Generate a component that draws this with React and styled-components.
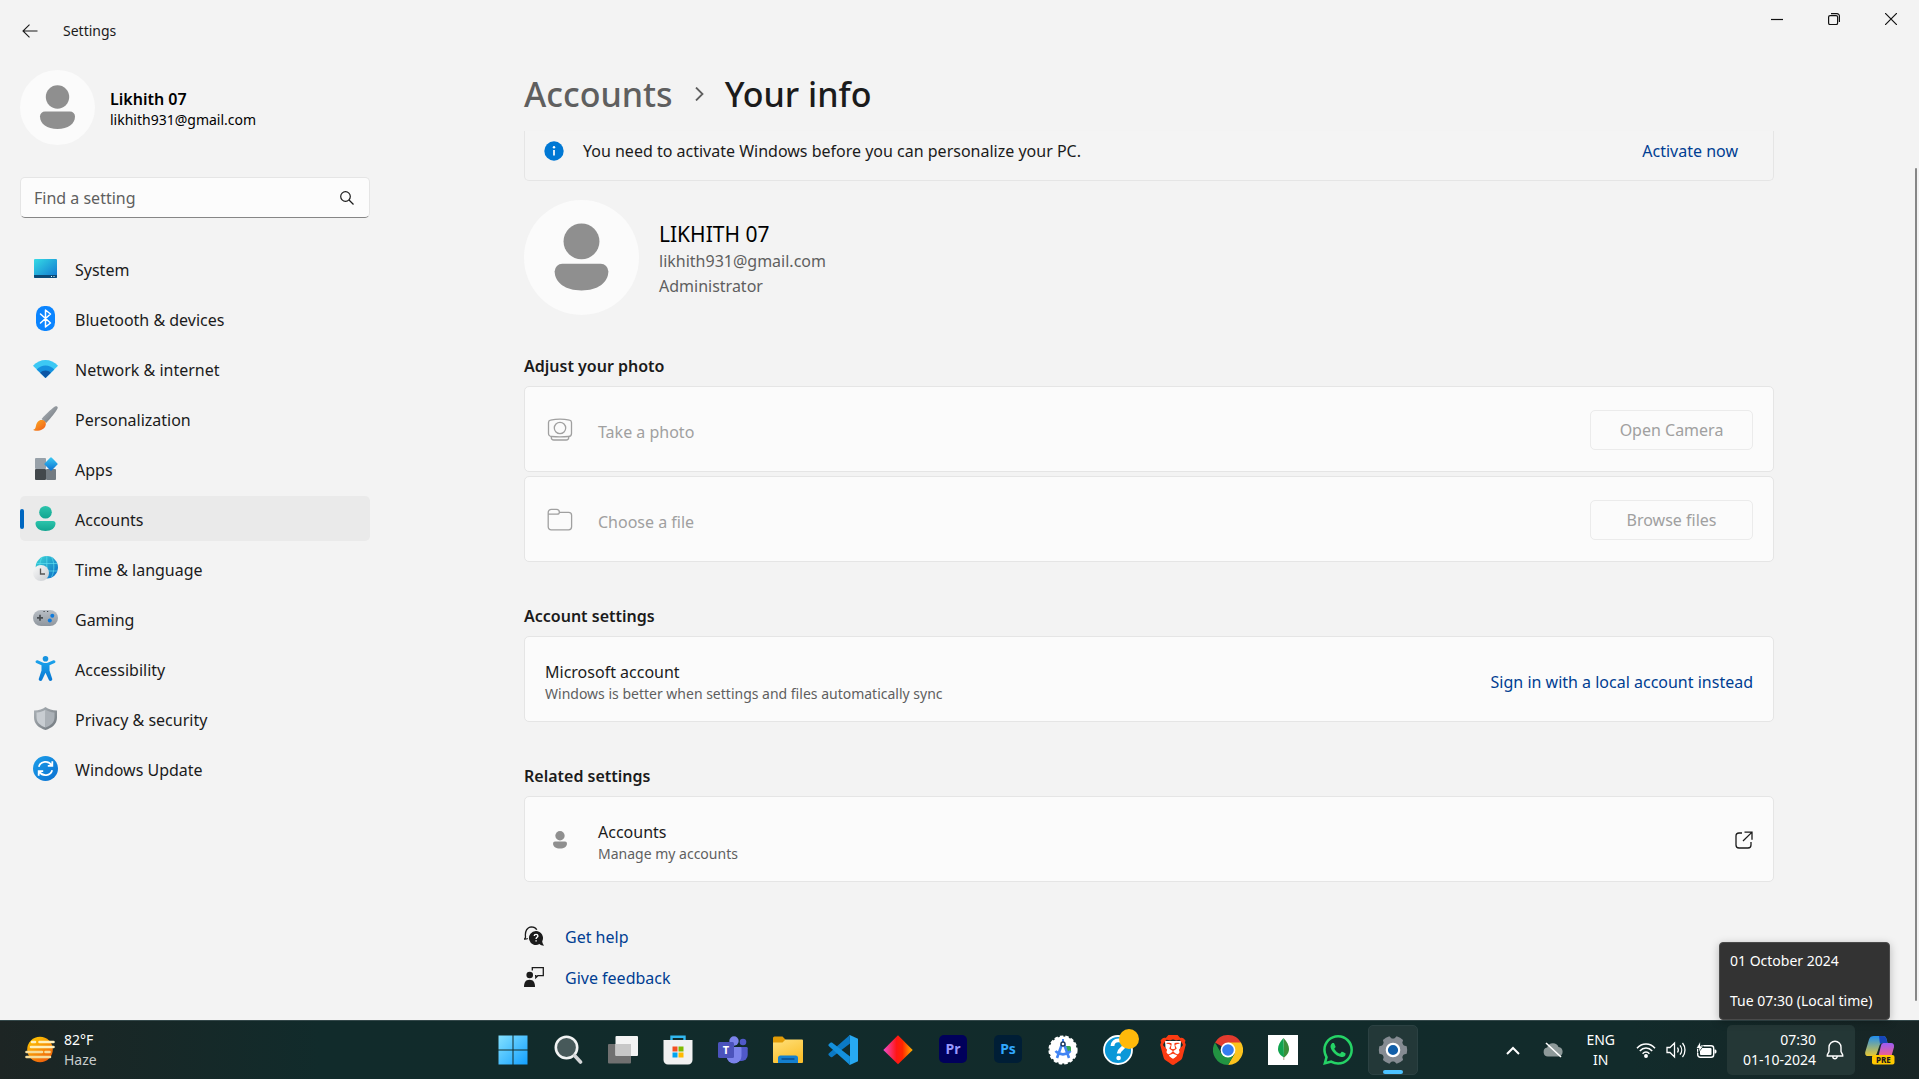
import React from 'react';
import styled, { createGlobalStyle } from 'styled-components';
import { SiBrave, SiWhatsapp } from 'react-icons/si';

const GlobalStyle = createGlobalStyle`
  *, *::before, *::after { box-sizing: border-box; }
  body {
    margin: 0;
    background: #f3f3f3;
    color: #1b1b1b;
    font-family: 'Noto Sans', 'Open Sans', sans-serif;
    font-size: 16px;
    line-height: 24px;
  }
  button, input { font: inherit; color: inherit; }
  a { text-decoration: none; color: inherit; }
  h1, h2, p, ul { margin: 0; padding: 0; font: inherit; }
  ul { list-style: none; }
  svg { display: block; flex: none; }
`;

const Desktop = styled.div`
  display: flex;
  flex-direction: column;
  min-height: 100vh;
`;

const SettingsWindow = styled.div`
  flex: 1;
  display: flex;
  flex-direction: column;
`;

const TitleBar = styled.header`
  display: flex;
  justify-content: space-between;
  height: 62px;
`;

const TitleLeft = styled.div`
  display: flex;
  align-items: center;
  gap: 16px;
  padding-left: 12px;
  font-size: 14px;
`;

const PlainButton = styled.button`
  display: grid;
  place-items: center;
  width: ${(p) => p.$w}px;
  height: ${(p) => p.$h}px;
  padding: 0;
  border: 0;
  background: none;
`;

const WindowControls = styled.div`
  display: flex;
`;

const Columns = styled.div`
  flex: 1;
  display: flex;
`;

const Sidebar = styled.aside`
  flex: none;
  width: 379px;
  padding: 8px 9px 0 20px;
`;

const Profile = styled.div`
  display: flex;
  align-items: center;
  gap: 15px;
  color: #000;
`;

const ProfileText = styled.div`
  padding-top: 4px;
  line-height: 21px;
`;

const ProfileName = styled.p`
  font-weight: 600;
`;

const SmallText = styled.p`
  font-size: 14px;
  line-height: 20px;
  color: ${(p) => p.$color || 'inherit'};
`;

const SearchBox = styled.form`
  display: flex;
  align-items: center;
  height: 41px;
  margin: 32px 0 28px;
  padding: 0 15px 0 13px;
  border: 1px solid #e5e5e5;
  border-bottom-color: #868686;
  border-radius: 5px;
  background: #fcfcfc;
`;

const SearchInput = styled.input`
  flex: 1;
  min-width: 0;
  padding: 0;
  border: 0;
  outline: 0;
  background: none;
  &::placeholder { color: #5f5f5f; opacity: 1; }
`;

const NavList = styled.ul`
  display: flex;
  flex-direction: column;
  gap: 5px;
`;

const NavLink = styled.a`
  position: relative;
  display: flex;
  align-items: center;
  gap: 17px;
  height: 45px;
  padding-left: 13px;
  border-radius: 5px;
  background: ${(p) => (p.$active ? '#eaeaea' : 'transparent')};
  &::before {
    content: '';
    display: ${(p) => (p.$active ? 'block' : 'none')};
    position: absolute;
    left: 0;
    top: 13px;
    width: 4px;
    height: 20px;
    border-radius: 2px;
    background: #0067c0;
  }
`;

const NavLabel = styled.span`
  padding-top: 2px;
`;

const Main = styled.main`
  position: relative;
  flex: 1;
  min-width: 0;
  padding: 8px 20px 0;
`;

const ScrollThumb = styled.div`
  position: absolute;
  top: 106px;
  bottom: 19px;
  right: 2px;
  width: 2px;
  border-radius: 1px;
  background: #868686;
`;

const Content = styled.div`
  max-width: 1250px;
  margin: 0 auto;
`;

const Breadcrumb = styled.nav`
  display: flex;
  align-items: center;
  gap: 19px;
  padding-bottom: 13px;
  font-size: 34px;
  line-height: 48px;
  font-weight: 500;
`;

const CrumbLink = styled.a`
  color: #5f5f5f;
`;

const Banner = styled.div`
  display: flex;
  align-items: center;
  gap: 19px;
  height: 50px;
  padding: 0 35px 9px 19px;
  border: 1px solid #e5e5e5;
  border-top: 0;
  border-radius: 0 0 5px 5px;
  background: #f4f4f4;
`;

const Grow = styled.div`
  flex: 1;
  min-width: 0;
`;

const BlueLink = styled.a`
  color: #003e92;
`;

const Hero = styled.div`
  display: flex;
  align-items: center;
  gap: 20px;
  margin: 19px 0 -3px;
`;

const HeroText = styled.div`
  padding-top: 2px;
`;

const HeroName = styled.p`
  color: #000;
  font-size: 21px;
  line-height: 30px;
`;

const HeroLine = styled.p`
  color: #5f5f5f;
  line-height: 25px;
`;

const SectionTitle = styled.h2`
  margin: 42px 0 8px;
  font-weight: 600;
`;

const CardStack = styled.div`
  display: flex;
  flex-direction: column;
  gap: 4px;
`;

const Card = styled.div`
  display: flex;
  align-items: center;
  height: 86px;
  padding: 2px 20px 0;
  border: 1px solid #e5e5e5;
  border-radius: 5px;
  background: #fbfbfb;
`;

const CardText = styled(Grow)`
  padding-top: 3px;
`;

const CardLink = styled(BlueLink)`
  padding-top: 3px;
`;

const CardIcon = styled.div`
  display: grid;
  place-items: center;
  width: 30px;
  margin-right: 23px;
`;

const Muted = styled.span`
  color: #a0a0a0;
`;

const CardButton = styled.button`
  width: 163px;
  height: 40px;
  padding: 0;
  border: 1px solid #ebebeb;
  border-radius: 5px;
  background: #fbfbfb;
  &:disabled { color: #a0a0a0; }
`;

const HelpLinks = styled.ul`
  display: flex;
  flex-direction: column;
  gap: 17px;
  padding: 43px 0 20px;
`;

const HelpItem = styled.li`
  display: flex;
  align-items: center;
  gap: 21px;
  svg { margin-bottom: 3px; }
`;

const Taskbar = styled.footer`
  display: grid;
  grid-template-columns: 1fr auto 1fr;
  align-items: center;
  height: 59px;
  padding-right: 13px;
  border-top: 1px solid #34484a;
  background: linear-gradient(90deg, #1d2524 0, #192726 100px, #112b2b 320px, #122b2b 85%, #182525 100%);
  color: #fff;
  font-size: 14px;
  line-height: 20px;
`;

const Weather = styled.button`
  display: flex;
  align-items: center;
  gap: 9px;
  justify-self: start;
  padding: 0 0 0 25px;
  border: 0;
  background: none;
  text-align: left;
`;

const WeatherNote = styled.span`
  display: block;
  color: #c8cccc;
`;

const AppStrip = styled.div`
  display: flex;
  gap: 5px;
`;

const AppButton = styled.button`
  position: relative;
  display: grid;
  place-items: center;
  width: 50px;
  height: 50px;
  padding: 0;
  border: 1px solid ${(p) => (p.$active ? '#2b4142' : 'transparent')};
  border-radius: 5px;
  background: ${(p) => (p.$active ? '#233838' : 'none')};
  &::after {
    content: '';
    display: ${(p) => (p.$active ? 'block' : 'none')};
    position: absolute;
    bottom: 0;
    left: 14px;
    width: 20px;
    height: 4px;
    border-radius: 2px;
    background: #4cc2ff;
  }
`;

const AdobeTile = styled.span`
  display: grid;
  place-items: center;
  width: 28px;
  height: 28px;
  margin-bottom: 2px;
  border-radius: 5px;
  background: ${(p) => p.$bg};
  color: ${(p) => p.$fg};
  font-size: 14px;
  font-weight: 700;
`;

const IconStack = styled.span`
  display: grid;
  place-items: center;
  > * { grid-area: 1 / 1; }
`;

const Tray = styled.div`
  display: flex;
  align-items: center;
  justify-self: end;
  padding-right: 11px;
`;

const TrayButton = styled.button`
  display: flex;
  align-items: center;
  justify-content: center;
  gap: 10px;
  height: 50px;
  padding: 0 ${(p) => p.$pad}px;
  border: 0;
  border-radius: 5px;
  background: ${(p) => (p.$lit ? '#243736' : 'none')};
  text-align: ${(p) => p.$align || 'center'};
`;

const ClockText = styled.span`
  min-width: 78px;
`;

const ClockWrap = styled.div`
  position: relative;
  margin-right: 10px;
`;

const Tooltip = styled.div`
  position: absolute;
  left: -8px;
  bottom: calc(100% + 5px);
  width: max-content;
  min-width: 171px;
  padding: 8px 12px 8px 10px;
  border: 1px solid #4a4a4a;
  border-radius: 4px;
  background: #333;
  box-shadow: 0 2px 8px rgba(0, 0, 0, 0.25);
`;

const TooltipTime = styled.p`
  margin-top: 20px;
`;

/* ---------- shared drawings ---------- */

const Person = ({ size, disc }) => (
  <svg width={size} height={size} viewBox="0 0 75 75">
    {disc && <circle cx="37.5" cy="37.5" r="37.5" fill="#fbfbfb" />}
    <circle cx="37.5" cy="27" r="11.7" fill="#8f8f8f" />
    <path d="M25 41.5h25a5 5 0 0 1 5 5C55 54 48 59 37.5 59S20 54 20 46.500a5 5 0 0 1 5-5z" fill="#8f8f8f" />
  </svg>
);

const Grad = ({ id, from, to, x2 = 1, y2 = 1 }) => (
  <linearGradient id={id} x1="0" y1="0" x2={x2} y2={y2}>
    <stop offset="0" stopColor={from} />
    <stop offset="1" stopColor={to} />
  </linearGradient>
);

/* ---------- sidebar icons ---------- */

const NavSvg = ({ children }) => (
  <svg width="25" height="25" viewBox="0 0 25 25">{children}</svg>
);

const SystemIcon = () => (
  <NavSvg>
    <defs><Grad id="sys" from="#35dbe6" to="#0f74cf" /></defs>
    <rect x="1" y="3" width="23" height="19" rx="1" fill="url(#sys)" />
    <path d="M1 19h23v2a1 1 0 0 1-1 1H2a1 1 0 0 1-1-1z" fill="#0a4a78" />
    <path d="M18 20.500h1M20.500 20.500h1" stroke="#dff" strokeWidth="1" />
  </NavSvg>
);

const BluetoothIcon = () => (
  <NavSvg>
    <rect x="3" width="19" height="25" rx="8.5" fill="#0a84ff" />
    <path d="M7.500 8l10 9-5 4V4l5 4-10 9" fill="none" stroke="#fff" strokeWidth="1.500" strokeLinejoin="round" strokeLinecap="round" />
  </NavSvg>
);

const NetworkIcon = () => (
  <NavSvg>
    <path d="M0 9.800C7 2.200 18 2.200 25 9.800L12.500 22z" fill="#3cc8f4" />
    <path d="M3.700 13.400c5-5.300 12.600-5.300 17.600 0L12.500 22z" fill="#1590df" />
    <path d="M7.200 16.800c3-3 7.600-3 10.600 0L12.500 22z" fill="#0c56a5" />
  </NavSvg>
);

const BrushIcon = () => (
  <NavSvg>
    <defs>
      <Grad id="handle" from="#b4bac0" to="#6b7177" />
      <Grad id="bristle" from="#fdb022" to="#ef5a1a" />
    </defs>
    <path d="M22.500.3c1.500-.6 2.700.6 2 2.200-.8 2-6.500 9.500-11.300 14.500l-4.600-4C13.500 7.500 20.500 1.100 22.500.3z" fill="url(#handle)" />
    <path d="M8.500 14c2.800 0 4.800 2 4.300 4.800-.7 4-5 6-9.300 6-1.500 0-2.700-.3-3.300-1 2-.4 2.300-1.800 2.800-4C3.700 16.500 5.500 14 8.500 14z" fill="url(#bristle)" />
  </NavSvg>
);

const AppsIcon = () => (
  <NavSvg>
    <defs><Grad id="dia" from="#3ccbf4" to="#0b6fd0" /></defs>
    <rect x="2" y="2" width="11" height="11" rx="1" fill="#98a1a9" />
    <rect x="2" y="13" width="11" height="11" rx="1" fill="#43484c" />
    <rect x="13" y="13" width="10" height="11" rx="1" fill="#737b82" />
    <rect x="13" y="3" width="10" height="10" rx="1.200" transform="rotate(45 18 8)" fill="url(#dia)" />
  </NavSvg>
);

const AccountsIcon = () => (
  <NavSvg>
    <defs><Grad id="acc" from="#2cc4ac" to="#12a590" x2={0} /></defs>
    <circle cx="12.500" cy="6.300" r="6.300" fill="url(#acc)" />
    <path d="M5 15h15a2.500 2.500 0 0 1 2.500 2.500c0 4.500-4.200 7.500-10 7.500s-10-3-10-7.500A2.500 2.500 0 0 1 5 15z" fill="url(#acc)" />
  </NavSvg>
);

const TimeIcon = () => (
  <NavSvg>
    <defs><Grad id="globe" from="#3cdad6" to="#0a68c6" /><Grad id="dial" from="#fafafa" to="#c9ccd0" /></defs>
    <circle cx="13.800" cy="11.300" r="11.200" fill="url(#globe)" />
    <path d="M3.500 7.500h20.500M3.500 15h20.500M13.800 0v22M9 1c-3 6-3 14 0 20M18.600 1c3 6 3 14 0 20" fill="none" stroke="#5fe0f0" strokeWidth=".9" opacity=".75" />
    <circle cx="8" cy="17" r="8" fill="url(#dial)" />
    <path d="M7.500 12.500v5.500h4.500" fill="none" stroke="#555" strokeWidth="1.300" />
  </NavSvg>
);

const GamingIcon = () => (
  <NavSvg>
    <defs><Grad id="pad" from="#b9bfc6" to="#8f969e" x2={0} /></defs>
    <rect y="4" width="25" height="16" rx="8" fill="url(#pad)" />
    <path d="M7 8.800v6M4 11.800h6" stroke="#484d52" strokeWidth="1.700" />
    <circle cx="19.300" cy="9.700" r="2" fill="#0f7bdc" />
    <circle cx="16.800" cy="14.500" r="2" fill="#0f7bdc" />
    <path d="M10.500 5.500h1.200M14 5.500h1.200" stroke="#3d4246" strokeWidth="1.200" />
  </NavSvg>
);

const AccessIcon = () => (
  <NavSvg>
    <defs><Grad id="body" from="#1ba3ec" to="#0877d2" x2={0} /></defs>
    <circle cx="12.500" cy="2.800" r="2.800" fill="#1693e0" />
    <path d="M4.600 4.300l5.200 2.100a7 7 0 0 0 5.400 0l5.200-2.100c1.800-.6 2.900 1.900 1.200 2.800L16.500 9.200v5.300l2.700 8.300c.6 2-2.500 3-3.300 1.200L12.500 16.700 9.100 24c-.8 1.800-3.900.8-3.300-1.200l2.700-8.300V9.200L3.400 7.100C1.700 6.200 2.800 3.700 4.600 4.300z" fill="url(#body)" />
  </NavSvg>
);

const PrivacyIcon = () => (
  <NavSvg>
    <defs><Grad id="sh" from="#aeb4b9" to="#6e757b" /></defs>
    <path d="M12.500 1c3 2.200 6.500 3.300 11.500 3.500v7C24 18 19 22 12.500 24 6 22 1 18 1 11.500v-7C6 4.300 9.500 3.200 12.500 1z" fill="url(#sh)" />
    <path d="M12.500 3.800v17.700C7.500 19.700 3.500 16.500 3.500 11.500v-5c4-.3 6.500-1.100 9-2.700z" fill="#c8cdd2" />
    <path d="M12.500 3.800c2.500 1.600 5 2.400 9 2.700v5c0 5-4 8.200-9 10z" fill="#abb1b7" />
  </NavSvg>
);

const UpdateIcon = () => (
  <NavSvg>
    <defs><Grad id="upd" from="#1c9fea" to="#0a6fd0" /></defs>
    <circle cx="12.500" cy="12.500" r="12.500" fill="url(#upd)" />
    <path d="M5.800 10.800a7 7 0 0 1 12.700-1.600M19.200 14.200a7 7 0 0 1-12.700 1.600M19.300 5.300v4.500h-4.500M5.700 19.700v-4.500h4.500" fill="none" stroke="#fff" strokeWidth="1.800" />
  </NavSvg>
);

/* ---------- content icons ---------- */

const CameraIcon = () => (
  <svg width="26" height="24" viewBox="0 0 26 24" fill="none" stroke="#a0a0a0" strokeWidth="1.300">
    <path d="M3.500 2.200c6-1.400 13-1.400 19 0a2.500 2.500 0 0 1 2 2.500v10.800a3 3 0 0 1-3 3c-5.500.5-11.500.5-17 0a3 3 0 0 1-3-3V4.700a2.500 2.500 0 0 1 2-2.500z" />
    <circle cx="13" cy="10" r="5.700" />
    <path d="M4.300 18.500v1a2.500 2.500 0 0 0 2.500 2.500h12.400a2.500 2.500 0 0 0 2.500-2.500v-1" />
  </svg>
);

const FolderIcon = () => (
  <svg width="26" height="24" viewBox="0 0 26 24" fill="none" stroke="#a0a0a0" strokeWidth="1.300">
    <path d="M1.200 4.500A3.200 3.200 0 0 1 4.400 1.300h5a3 3 0 0 1 3 3h9.200a3 3 0 0 1 3 3v11.500a3 3 0 0 1-3 3H4.200a3 3 0 0 1-3-3zM1.500 6.200h8.500c1.500 0 2.400-.7 2.400-1.900" />
  </svg>
);

const InfoIcon = () => (
  <svg width="20" height="20" viewBox="0 0 20 20">
    <circle cx="10" cy="10" r="9.700" fill="#0078d4" />
    <circle cx="10" cy="6.200" r="1.200" fill="#fff" />
    <path d="M10 9v5.500" stroke="#fff" strokeWidth="1.700" />
  </svg>
);

const OpenIcon = () => (
  <svg width="18" height="18" viewBox="0 0 18 18" fill="none" stroke="#1b1b1b" strokeWidth="1.300">
    <path d="M7 2H4a3 3 0 0 0-3 3v9a3 3 0 0 0 3 3h9a3 3 0 0 0 3-3v-3M9.500 1.200H17v7.500M16.800 1.400L8 10" />
  </svg>
);

const HelpIcon = () => (
  <svg width="20" height="20" viewBox="0 0 20 20">
    <path d="M3.800 12.500c-1 .5-2 .8-3.500.7.900-.8 1.300-1.600 1.200-2.600C.8 5.500 3 1 7.500.8c2.500 0 4.300 1.200 5.300 3" fill="none" stroke="#1b1b1b" strokeWidth="1.300" />
    <path d="M12 5a7 7 0 0 1 6.200 10.300c.1 1.500.8 2.800 1.800 4.400-1.800 0-3.400-.6-4.600-1.600A7 7 0 1 1 12 5z" fill="#1b1b1b" />
    <path d="M10.200 10c0-2.200 3.700-2.200 3.700 0 0 1.300-1.800 1.400-1.800 3M12.100 14.200v1.300" fill="none" stroke="#fff" strokeWidth="1.400" />
  </svg>
);

const FeedbackIcon = () => (
  <svg width="20" height="20" viewBox="0 0 20 20">
    <circle cx="5.700" cy="8" r="3.300" fill="#1b1b1b" />
    <path d="M0 20c0-4.500 1.500-7.300 5.500-7.300S11 15.500 11 20z" fill="#1b1b1b" />
    <path d="M8.300 3.500V.7h11v8h-5.500l-2 2V8.700h-.8" fill="none" stroke="#1b1b1b" strokeWidth="1.300" />
  </svg>
);

/* ---------- taskbar icons ---------- */

const Icon30 = ({ children }) => (
  <svg width="30" height="30" viewBox="0 0 30 30">{children}</svg>
);

const HazeIcon = () => (
  <Icon30>
    <defs><Grad id="sun" from="#ffd000" to="#f0650c" x2={0.6} /></defs>
    <circle cx="15" cy="14.500" r="12.800" fill="url(#sun)" />
    <g strokeLinecap="round" strokeWidth="2.600" fill="none">
      <path d="M7 7h3M14.500 7H28.500M6 12h22.500" stroke="#fff0bd" />
      <path d="M1.500 17h15.500M20.500 17h4M1.500 22h23.500" stroke="#f6dc9a" />
    </g>
  </Icon30>
);

const StartIcon = () => (
  <Icon30>
    <defs><linearGradient id="win" gradientUnits="userSpaceOnUse" x1="0" y1="0" x2="30" y2="30"><stop stopColor="#86e2ff" /><stop offset="1" stopColor="#119fff" /></linearGradient></defs>
    <path d="M.5.500h14v14H.5zM15.500.500h14v14h-14zM.5 15.500h14v14H.5zM15.500 15.500h14v14h-14z" fill="url(#win)" />
  </Icon30>
);

const SearchAppIcon = () => (
  <Icon30>
    <circle cx="13.500" cy="12.500" r="10.700" fill="#47595a" stroke="#f1f3f3" strokeWidth="2.600" />
    <path d="M21.500 20.500l6 6.500" stroke="#d4d6d8" strokeWidth="3.600" strokeLinecap="round" />
  </Icon30>
);

const TaskViewIcon = () => (
  <Icon30>
    <rect x="0" y="9" width="23" height="19.500" rx="1" fill="#707070" />
    <rect x="7.500" y="1" width="22.500" height="20" rx="1" fill="#f3f3f3" />
    <path d="M7.500 9H23v12H8.500a1 1 0 0 1-1-1z" fill="#c7c7c7" />
  </Icon30>
);

const StoreIcon = () => (
  <Icon30>
    <path d="M8.500 6V1.800h13V6" fill="none" stroke="#31b8f0" strokeWidth="2.400" />
    <path d="M.5 5h29v20a4.500 4.500 0 0 1-4.500 4.500H5A4.500 4.500 0 0 1 .5 25z" fill="#f1f1f1" />
    <path d="M9.500 11.500h5v5h-5z" fill="#f25022" /><path d="M15.500 11.500h5v5h-5z" fill="#7fba00" />
    <path d="M9.500 17.500h5v5h-5z" fill="#00a4ef" /><path d="M15.500 17.500h5v5h-5z" fill="#ffb900" />
  </Icon30>
);

const TeamsIcon = () => (
  <Icon30>
    <circle cx="25" cy="7" r="3.300" fill="#5059c9" />
    <path d="M20 12h8.500a1.200 1.200 0 0 1 1.200 1.200V20a6 6 0 0 1-6 6H20z" fill="#5059c9" />
    <circle cx="16" cy="6" r="4.700" fill="#7b83eb" />
    <path d="M9.500 12h13a1 1 0 0 1 1 1v8a7.500 7.500 0 0 1-15 0v-8a1 1 0 0 1 1-1z" fill="#7b83eb" />
    <rect x="0" y="7" width="16" height="16" rx="1.500" fill="#4b53bc" />
    <text x="8" y="19" textAnchor="middle" fontSize="11" fontWeight="700" fill="#fff">T</text>
  </Icon30>
);

const ExplorerIcon = () => (
  <Icon30>
    <defs><Grad id="fold" from="#ffe07a" to="#fbc02d" x2={0.5} /></defs>
    <path d="M0 3a1.500 1.500 0 0 1 1.500-1.500h8L13 5v6H0z" fill="#e29c07" />
    <path d="M12.500 4.500H29a1 1 0 0 1 1 1V27a1 1 0 0 1-1 1H1a1 1 0 0 1-1-1V7.500h9.500z" fill="url(#fold)" />
    <path d="M5 28v-5a2.500 2.500 0 0 1 2.500-2.500h15A2.500 2.500 0 0 1 25 23v5z" fill="#1480cf" />
    <path d="M9 24h12" stroke="#0a4b8c" strokeWidth="1.300" strokeLinecap="round" />
  </Icon30>
);

const CodeIcon = () => (
  <Icon30>
    <path d="M21.800 0L1 18.300c-.8.7-.8 1.600 0 2.300l1.400 1.200c.6.500 1.300.5 1.900.1L22 8.500z" fill="#0b79c4" />
    <path d="M21.800 30L1 11.300C.2 10.600.2 9.700 1 9l1.400-1.200c.6-.5 1.300-.5 1.900-.1L22 21.500z" fill="#1490dc" />
    <path d="M21.800 0L30 3.800v22.400L21.800 30c-.8 0 .2-1 .2-2V2c0-1-1-2-.2-2z" fill="#27a9f2" />
  </Icon30>
);

const DiamondIcon = () => (
  <Icon30>
    <defs>
      <linearGradient id="gem"><stop stopColor="#f04dd0" /><stop offset=".45" stopColor="#ff1616" /><stop offset=".65" stopColor="#ff2600" /><stop offset="1" stopColor="#ffb400" /></linearGradient>
    </defs>
    <path d="M15 .3L29.700 15 15 29.300.3 15z" fill="url(#gem)" />
  </Icon30>
);

const StudioIcon = () => (
  <Icon30>
    <circle cx="15" cy="15" r="13.600" fill="#fff" stroke="#fff" strokeWidth="2" strokeDasharray="3.500 2" />
    <path d="M18 11h3.500a1.500 1.500 0 0 1 1.500 1.500v4l-4 1z" fill="#34a853" />
    <path d="M14 9L9 23M16 9l5 14M7.500 16c4 4.500 11 4.500 15 0" fill="none" stroke="#4285f4" strokeWidth="2.600" />
    <path d="M15 4v3" stroke="#4285f4" strokeWidth="2" />
    <circle cx="15" cy="9" r="2" fill="#fff" stroke="#1f3a5f" strokeWidth="1.400" />
  </Icon30>
);

const QuestionIcon = () => (
  <svg width="42" height="42" viewBox="-6 -6 42 42">
    <circle cx="15" cy="15" r="14" fill="#0b98d8" stroke="#fff" strokeWidth="1.800" />
    <path d="M9.500 11c0-7 11.500-7.500 11.500-1 0 4-5.300 4-5.300 8.500" fill="none" stroke="#fff" strokeWidth="3.800" />
    <circle cx="15.600" cy="23" r="2.300" fill="#fff" />
    <circle cx="26" cy="4" r="10" fill="#ffb90b" />
  </svg>
);

const ChromeIcon = () => (
  <Icon30>
    <path d="M15 15L2 7.500A15 15 0 0 1 28 7.500z" fill="#e33b2e" />
    <path d="M15 7.500h13A15 15 0 0 1 15 30l6.500-11.300z" fill="#fcc31e" />
    <path d="M2 7.500A15 15 0 0 0 15 30l6.500-11.300L15 15 8.500 18.700z" fill="#229342" />
    <circle cx="15" cy="15" r="7.400" fill="#fff" />
    <circle cx="15" cy="15" r="5.800" fill="#357cf0" />
  </Icon30>
);

const LeafIcon = () => (
  <Icon30>
    <path d="M0 0h30v30H0z" fill="#fff" />
    <path d="M15.500 3c3.500 4 5.500 7 5.500 11 0 4-2.500 6.800-5 8.500z" fill="#3b8f3a" />
    <path d="M15.500 3c-3.500 4-5.500 7-5.500 11 0 4 3 7 6 8.500z" fill="#12a34f" />
    <path d="M15.800 22v3" stroke="#b7a88f" strokeWidth="1" />
  </Icon30>
);

const gearTeeth = [0, 60, 120, 180, 240, 300];
const GearIcon = () => (
  <Icon30>
    <g fill="#858b92">
      <circle cx="15" cy="15" r="11.500" />
      {gearTeeth.map((a) => (
        <path key={a} d="M24 10l4.700 1.300a15 15 0 0 1 0 7.400L24 20z" transform={`rotate(${a} 15 15)`} />
      ))}
    </g>
    <circle cx="15" cy="15" r="6.200" fill="#115ea8" stroke="#fff" strokeWidth="2.200" />
  </Icon30>
);

const CopilotIcon = () => (
  <Icon30>
    <defs>
      <Grad id="cpa" from="#1f8ff0" to="#e8c832" x2={0} />
      <Grad id="cpb" from="#9a5cf5" to="#f0608c" x2={0} />
    </defs>
    <path d="M9 1h9c2 0 3 1.200 3.500 3l1 4h-5c-1.500 0-2.500 1-3 2.500L12 18c-.6 2-1.800 3-4 3H3c-2.500 0-3.300-2-2.600-4.500L4 4.500C4.700 2 6.500 1 9 1z" fill="url(#cpa)" />
    <path d="M14 1h4c2 0 3 1.200 3.500 3l1 4h-5c-1 0-2 .5-2.500 1.500z" fill="#1746b8" />
    <path d="M18.500 8H26c2.500 0 3.500 2 2.900 4.500L26.500 21H13.500l2.500-10.500c.4-1.500 1.200-2.500 2.500-2.500z" fill="url(#cpb)" />
    <rect x="7" y="20" width="22.500" height="9.500" rx="2" fill="#ffc800" />
    <text x="18.300" y="27.700" textAnchor="middle" fontSize="8" fontWeight="800" fill="#1b1b1b">PRE</text>
  </Icon30>
);

const navItems = [
  ['System', SystemIcon],
  ['Bluetooth & devices', BluetoothIcon],
  ['Network & internet', NetworkIcon],
  ['Personalization', BrushIcon],
  ['Apps', AppsIcon],
  ['Accounts', AccountsIcon],
  ['Time & language', TimeIcon],
  ['Gaming', GamingIcon],
  ['Accessibility', AccessIcon],
  ['Privacy & security', PrivacyIcon],
  ['Windows Update', UpdateIcon],
];

const apps = [
  ['Start', <StartIcon />],
  ['Search', <SearchAppIcon />],
  ['Task view', <TaskViewIcon />],
  ['Store', <StoreIcon />],
  ['Teams', <TeamsIcon />],
  ['File Explorer', <ExplorerIcon />],
  ['Code', <CodeIcon />],
  ['Diamond', <DiamondIcon />],
  ['Premiere', <AdobeTile $bg="#00005b" $fg="#9999ff">Pr</AdobeTile>],
  ['Photoshop', <AdobeTile $bg="#001e36" $fg="#31a8ff">Ps</AdobeTile>],
  ['Studio', <StudioIcon />],
  ['Help', <QuestionIcon />],
  ['Brave', (
    <IconStack>
      <svg width="20" height="24" viewBox="0 0 20 24"><path d="M2 3h16l-1 13-7 6-7-6z" fill="#fff" /></svg>
      <SiBrave size={30} color="#fb3b12" />
    </IconStack>
  )],
  ['Chrome', <ChromeIcon />],
  ['Compass', <LeafIcon />],
  ['WhatsApp', <SiWhatsapp size={30} color="#25d366" />],
  ['Settings', <GearIcon />],
];

export default function App() {
  return (
    <Desktop>
      <GlobalStyle />
      <SettingsWindow>
        <TitleBar>
          <TitleLeft>
            <PlainButton $w={35} $h={35} aria-label="Back">
              <svg width="16" height="14" viewBox="0 0 16 14" fill="none" stroke="#1b1b1b" strokeWidth="1.100">
                <path d="M7.500.600L1 7l6.500 6.400M1 7h14.500" />
              </svg>
            </PlainButton>
            Settings
          </TitleLeft>
          <WindowControls>
            <PlainButton $w={57} $h={38} aria-label="Minimize">
              <svg width="12" height="12" viewBox="0 0 12 12"><path d="M0 6.500h12" stroke="#111" strokeWidth="1.200" /></svg>
            </PlainButton>
            <PlainButton $w={57} $h={38} aria-label="Restore">
              <svg width="12" height="12" viewBox="0 0 12 12" fill="none" stroke="#111" strokeWidth="1.200">
                <rect x=".6" y="2.600" width="9" height="9" rx="1.500" />
                <path d="M3 .600h6a2.400 2.400 0 0 1 2.400 2.400v6" />
              </svg>
            </PlainButton>
            <PlainButton $w={57} $h={38} aria-label="Close">
              <svg width="12" height="12" viewBox="0 0 12 12"><path d="M0 0l12 12M12 0L0 12" stroke="#111" strokeWidth="1.200" /></svg>
            </PlainButton>
          </WindowControls>
        </TitleBar>

        <Columns>
          <Sidebar>
            <Profile>
              <Person size={75} disc />
              <ProfileText>
                <ProfileName>Likhith 07</ProfileName>
                <SmallText>likhith931@gmail.com</SmallText>
              </ProfileText>
            </Profile>
            <SearchBox onSubmit={(e) => e.preventDefault()}>
              <SearchInput id="find" type="text" placeholder="Find a setting" />
              <label htmlFor="find" aria-label="Find a setting">
                <svg width="14" height="14" viewBox="0 0 14 14" fill="none" stroke="#1b1b1b" strokeWidth="1.200">
                  <circle cx="5.500" cy="5.500" r="4.800" /><path d="M9 9l4.500 4.500" />
                </svg>
              </label>
            </SearchBox>
            <nav>
              <NavList>
                {navItems.map(([label, Glyph]) => (
                  <li key={label}>
                    <NavLink href="#" $active={label === 'Accounts'}>
                      <Glyph />
                      <NavLabel>{label}</NavLabel>
                    </NavLink>
                  </li>
                ))}
              </NavList>
            </nav>
          </Sidebar>

          <Main>
            <ScrollThumb />
            <Content>
              <Breadcrumb>
                <CrumbLink href="#">Accounts</CrumbLink>
                <svg width="14" height="14" viewBox="0 0 14 14" fill="none" stroke="#5f5f5f" strokeWidth="1.800">
                  <path d="M4 .500L10.500 7 4 13.500" />
                </svg>
                <h1>Your info</h1>
              </Breadcrumb>

              <Banner>
                <InfoIcon />
                <Grow>You need to activate Windows before you can personalize your PC.</Grow>
                <BlueLink href="#">Activate now</BlueLink>
              </Banner>

              <Hero>
                <Person size={115} disc />
                <HeroText>
                  <HeroName>LIKHITH 07</HeroName>
                  <HeroLine>likhith931@gmail.com</HeroLine>
                  <HeroLine>Administrator</HeroLine>
                </HeroText>
              </Hero>

              <SectionTitle>Adjust your photo</SectionTitle>
              <CardStack>
                <Card>
                  <CardIcon><CameraIcon /></CardIcon>
                  <CardText><Muted>Take a photo</Muted></CardText>
                  <CardButton disabled>Open Camera</CardButton>
                </Card>
                <Card>
                  <CardIcon><FolderIcon /></CardIcon>
                  <CardText><Muted>Choose a file</Muted></CardText>
                  <CardButton disabled>Browse files</CardButton>
                </Card>
              </CardStack>

              <SectionTitle>Account settings</SectionTitle>
              <Card>
                <CardText>
                  <p>Microsoft account</p>
                  <SmallText $color="#5f5f5f">Windows is better when settings and files automatically sync</SmallText>
                </CardText>
                <CardLink href="#">Sign in with a local account instead</CardLink>
              </Card>

              <SectionTitle>Related settings</SectionTitle>
              <Card>
                <CardIcon><Person size={30} /></CardIcon>
                <CardText>
                  <p>Accounts</p>
                  <SmallText $color="#5f5f5f">Manage my accounts</SmallText>
                </CardText>
                <OpenIcon />
              </Card>

              <HelpLinks>
                <HelpItem><HelpIcon /><BlueLink href="#">Get help</BlueLink></HelpItem>
                <HelpItem><FeedbackIcon /><BlueLink href="#">Give feedback</BlueLink></HelpItem>
              </HelpLinks>
            </Content>
          </Main>
        </Columns>
      </SettingsWindow>

      <Taskbar>
        <Weather>
          <HazeIcon />
          <span>82°F<WeatherNote>Haze</WeatherNote></span>
        </Weather>
        <AppStrip>
          {apps.map(([name, glyph]) => (
            <AppButton key={name} aria-label={name} $active={name === 'Settings'}>{glyph}</AppButton>
          ))}
        </AppStrip>
        <Tray>
          <TrayButton $pad={11} aria-label="Hidden icons">
            <svg width="14" height="9" viewBox="0 0 14 9" fill="none" stroke="#fff" strokeWidth="2"><path d="M1 8l6-6 6 6" /></svg>
          </TrayButton>
          <TrayButton $pad={12} aria-label="Cloud sync off">
            <svg width="20" height="16" viewBox="0 0 20 16">
              <path d="M5 14.500a4.500 4.500 0 0 1-.8-8.900A6 6 0 0 1 15.500 5a4.800 4.800 0 0 1 0 9.500z" fill="#8e9a9a" />
              <path d="M3 1l15 14" stroke="#fff" strokeWidth="1.600" />
            </svg>
          </TrayButton>
          <TrayButton $pad={11}>ENG<br />IN</TrayButton>
          <TrayButton $pad={10} aria-label="Network, sound, battery">
            <svg width="20" height="16" viewBox="0 0 20 16" fill="none" stroke="#fff" strokeWidth="1.500">
              <path d="M1 6.300c5-5.600 13-5.600 18 0M3.800 9c3.500-3.900 8.900-3.900 12.400 0M6.600 11.700c2-2.200 4.800-2.200 6.800 0" />
              <circle cx="10" cy="14" r="1.200" fill="#fff" />
            </svg>
            <svg width="20" height="18" viewBox="0 0 20 18" fill="none" stroke="#fff" strokeWidth="1.300">
              <path d="M1 6.500h3L8.500 2v14L4 11.500H1zM11.500 6.500c1 1.500 1 3.500 0 5M14 4.300c2.200 2.700 2.200 6.700 0 9.400M16.500 2c3.300 4 3.300 10 0 14" />
            </svg>
            <svg width="21" height="18" viewBox="0 0 21 18">
              <rect x="1.700" y="4.700" width="16" height="11.500" rx="2.500" fill="none" stroke="#fff" strokeWidth="1.400" />
              <rect x="4" y="7" width="11.500" height="7" rx="1" fill="#fff" />
              <path d="M18.500 8.500c1.500 0 2 .5 2 2s-.5 2-2 2z" fill="#fff" />
              <path d="M4.500 0L0 7.500h3L2 12l5.500-7h-3z" fill="#fff" stroke="#122b2b" strokeWidth=".8" />
            </svg>
          </TrayButton>
          <ClockWrap>
            <TrayButton $pad={11} $lit $align="right">
              <ClockText>07:30<br />01-10-2024</ClockText>
              <svg width="18" height="20" viewBox="0 0 18 20" fill="none" stroke="#fff" strokeWidth="1.400">
                <path d="M9 1.200a6 6 0 0 0-6 6v4.300L1.300 15v1h15.400v-1L15 11.500V7.200a6 6 0 0 0-6-6zM6.800 16.500a2.200 2.200 0 0 0 4.400 0" />
              </svg>
            </TrayButton>
            <Tooltip role="tooltip">
              <p>01 October 2024</p>
              <TooltipTime>Tue 07:30 (Local time)</TooltipTime>
            </Tooltip>
          </ClockWrap>
          <CopilotIcon />
        </Tray>
      </Taskbar>
    </Desktop>
  );
}
